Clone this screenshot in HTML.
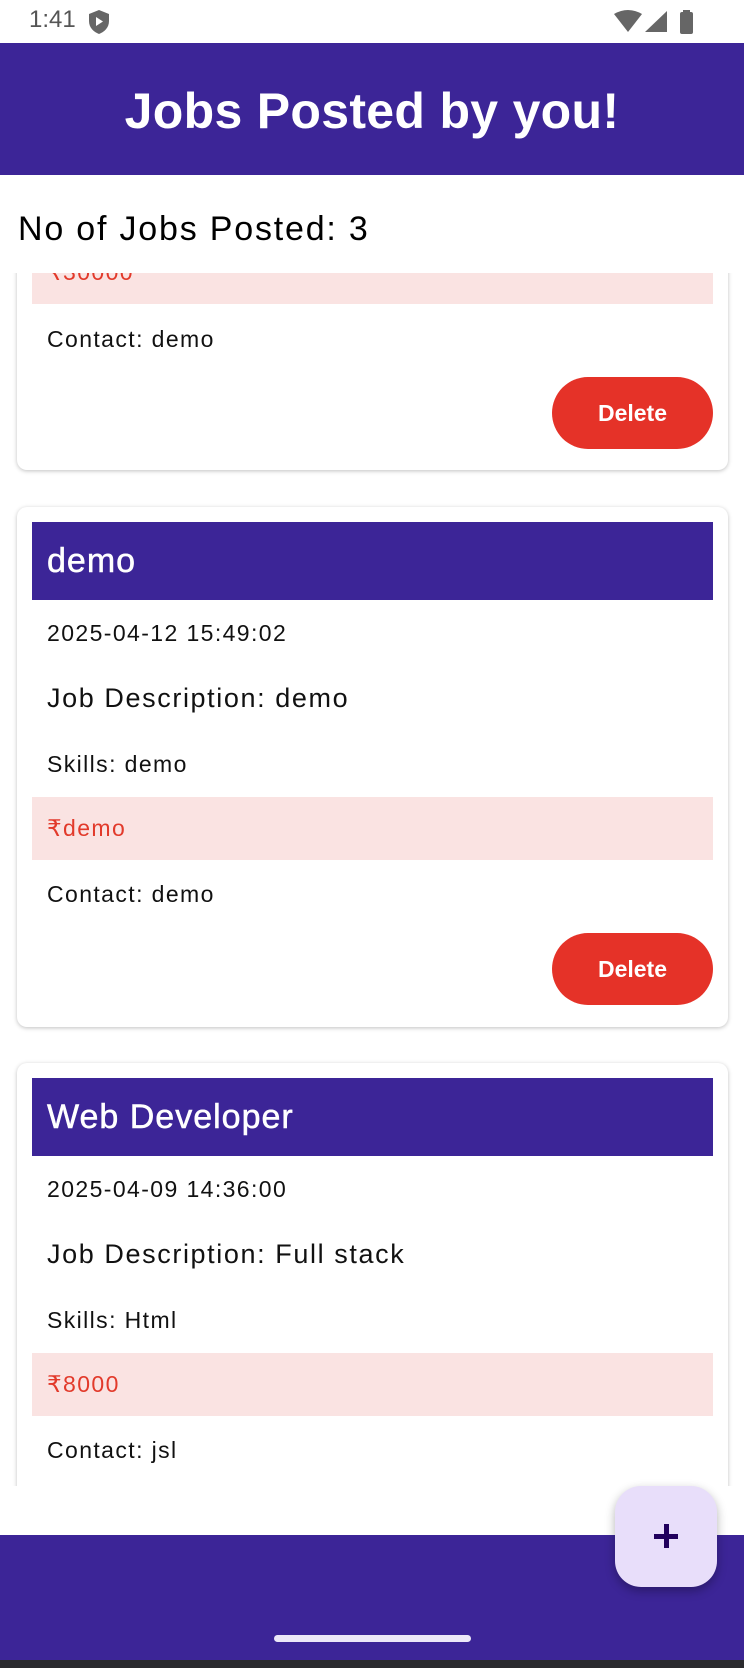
<!DOCTYPE html>
<html><head><meta charset="utf-8"><style>
*{margin:0;padding:0;box-sizing:border-box}
body{width:744px;height:1668px;position:relative;background:#fff;font-family:"Liberation Sans",sans-serif;overflow:hidden}
.abs{position:absolute}
.hdr{left:0;top:43px;width:744px;height:132px;background:#3c2597;color:#fff;font-weight:bold;font-size:50px;text-align:center;line-height:136px;letter-spacing:0.3px}
.count{left:18px;top:210px;font-size:34px;color:#000;letter-spacing:1.8px}
.list{left:0;top:273px;width:744px;height:1213px;overflow:hidden}
.card{position:absolute;left:17px;width:711px;background:#fff;border-radius:10px;box-shadow:0 1px 4px rgba(0,0,0,.25)}
.t{position:absolute;left:15px;width:681px;height:78px;background:#3c2597;color:#fff;font-size:34px;line-height:78px;padding-left:15px;letter-spacing:1px;-webkit-text-stroke:0.5px #fff}
.tx{position:absolute;left:30px;color:#111;font-size:23px;letter-spacing:1.4px}
.pr{position:absolute;left:15px;width:681px;height:63px;background:#fae3e2;color:#e23a2b;font-size:23px;line-height:63px;padding-left:15px;letter-spacing:1.4px}
.del{position:absolute;right:15px;width:161px;height:72px;border-radius:36px;background:#e53228;color:#fff;font-weight:bold;font-size:23px;text-align:center;line-height:72px}
.ds{font-size:27px;letter-spacing:1.6px}
</style></head><body>
<div class="abs" style="left:29px;top:6px;font-size:24px;color:#555">1:41</div>
<svg class="abs" style="left:88px;top:9px" width="22" height="26" viewBox="0 0 22 26"><path d="M11 1L21 5V12C21 19 16 23 11 25C6 23 1 19 1 12V5Z" fill="#666"/><path d="M8 8L15 12.5L8 17Z" fill="#fff"/></svg>
<svg class="abs" style="left:614px;top:10px" width="80" height="24" viewBox="0 0 80 24"><path d="M0 4Q14 -4 28 4L14 22Z" fill="#666"/><path d="M31 22L53 1V22Z" fill="#666"/><rect x="66" y="2" width="13" height="22" rx="2" fill="#666"/><rect x="69" y="0" width="7" height="3" fill="#666"/></svg>
<div class="abs hdr">Jobs Posted by you!</div>
<div class="abs count">No of Jobs Posted: 3</div>
<div class="abs list">
 <div class="card" style="top:-300px;height:497px">
  <div class="pr" style="top:268px">₹30000</div>
  <div class="tx" style="top:353px">Contact: demo</div>
  <div class="del" style="top:404px">Delete</div>
 </div>
 <div class="card" style="top:234px;height:520px">
  <div class="t" style="top:15px">demo</div>
  <div class="tx" style="top:113px">2025-04-12 15:49:02</div>
  <div class="tx ds" style="top:176px">Job Description: demo</div>
  <div class="tx" style="top:244px">Skills: demo</div>
  <div class="pr" style="top:290px">₹demo</div>
  <div class="tx" style="top:374px">Contact: demo</div>
  <div class="del" style="top:426px">Delete</div>
 </div>
 <div class="card" style="top:790px;height:520px">
  <div class="t" style="top:15px">Web Developer</div>
  <div class="tx" style="top:113px">2025-04-09 14:36:00</div>
  <div class="tx ds" style="top:176px">Job Description: Full stack</div>
  <div class="tx" style="top:244px">Skills: Html</div>
  <div class="pr" style="top:290px">₹8000</div>
  <div class="tx" style="top:374px">Contact: jsl</div>
 </div>
</div>
<div class="abs" style="left:0;top:1535px;width:744px;height:125px;background:#3c2597"></div>
<div class="abs" style="left:0;top:1660px;width:744px;height:8px;background:#2a2a2e"></div>
<div class="abs" style="left:274px;top:1635px;width:197px;height:7px;border-radius:4px;background:#ece8f8"></div>
<div class="abs" style="left:615px;top:1486px;width:102px;height:101px;border-radius:26px;background:#e8defa;box-shadow:0 4px 10px rgba(0,0,0,.3)"></div>
<div class="abs" style="left:654px;top:1534px;width:24px;height:5px;background:#21005d"></div>
<div class="abs" style="left:663.5px;top:1524px;width:5px;height:24px;background:#21005d"></div>
</body></html>
